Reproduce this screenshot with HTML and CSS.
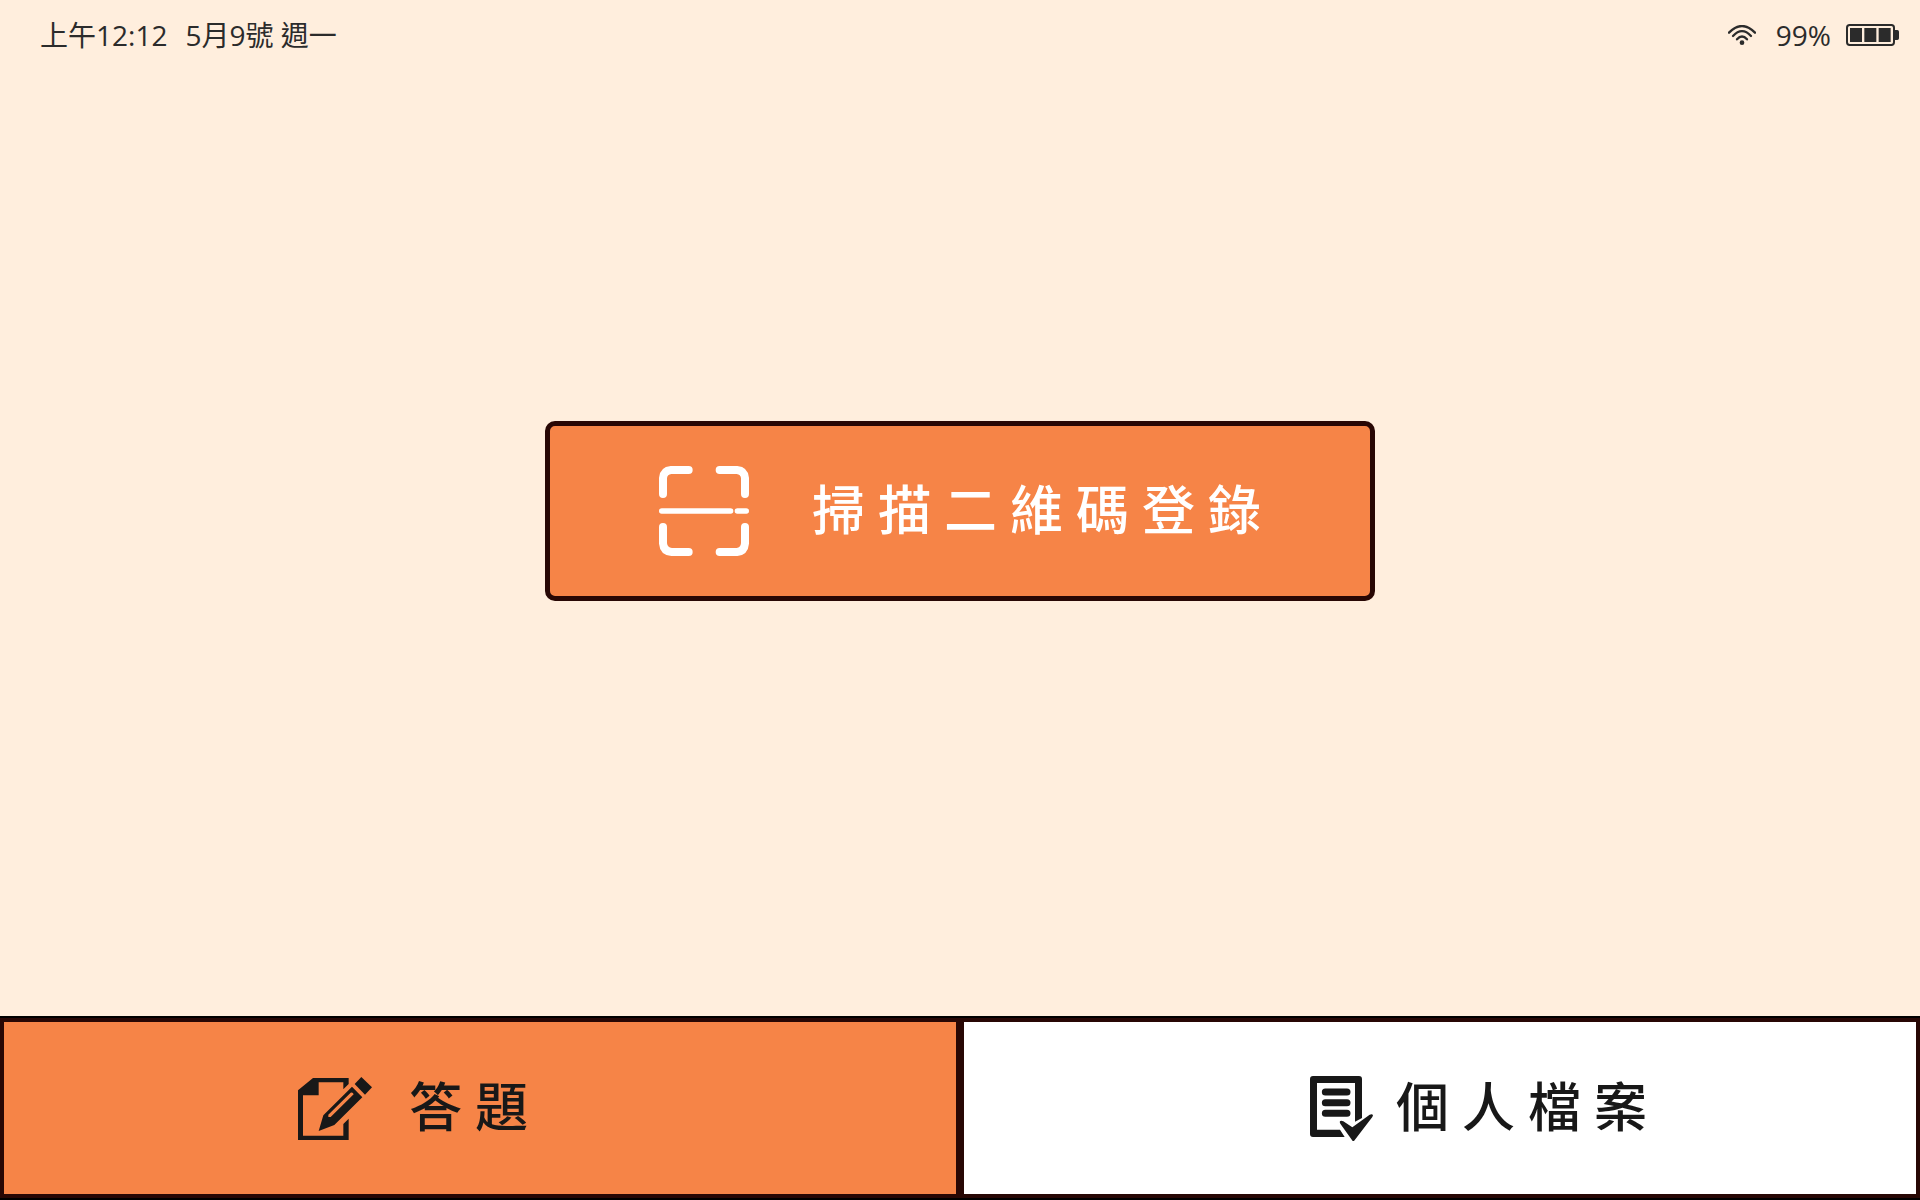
FILE: index.html
```html
<!DOCTYPE html>
<html lang="zh-Hant">
<head>
<meta charset="utf-8">
<meta name="viewport" content="width=device-width, initial-scale=1">
<title>掃描二維碼登錄</title>
<link rel="stylesheet" href="styles.css">
</head>
<body>
<header class="status">
  <div class="status-group">
    <span>上午12:12</span>
    <span>5月9號 週一</span>
  </div>
  <div class="status-group status-right">
    <svg class="wifi" viewBox="0 0 84 60" aria-hidden="true">
      <g fill="none" stroke="currentColor" stroke-width="7" stroke-linecap="round">
        <path d="M3 23Q42-17 81 23"/>
        <path d="M15 33Q42 4 69 33"/>
        <path d="M27 43Q42 26 57 43"/>
      </g>
      <circle cx="42" cy="53" r="7" fill="currentColor"/>
    </svg>
    <span>99%</span>
    <svg class="battery" viewBox="0 0 159 66" aria-hidden="true">
      <rect x="3" y="3" width="141" height="60" rx="8" fill="none" stroke="currentColor" stroke-width="6"/>
      <path fill="currentColor" d="M12 12h36v42H12zM55 12h36v42H55zM98 12h36v42H98zM146 18h8q5 0 5 5v20q0 5-5 5h-8z"/>
    </svg>
  </div>
</header>
<main class="main">
  <button class="scan" type="button">
    <svg class="scan-icon" viewBox="0 0 270 270" aria-hidden="true">
      <g fill="none" stroke="currentColor" stroke-linecap="round">
        <path stroke-width="24" d="M12 84V36Q14 14 36 12H89M182 12H234Q256 14 258 36V84M12 183V232Q14 256 38 258H89M182 258H234Q256 256 258 232V183"/>
        <path stroke-width="16" d="M8 135H215M235 135H262"/>
      </g>
    </svg>
    <span class="label">掃描二維碼登錄</span>
  </button>
</main>
<nav class="tabs">
  <button class="tab tab-quiz" type="button">
    <svg class="quiz-icon" viewBox="54 51 222 189" aria-hidden="true">
      <path fill="currentColor" fill-rule="evenodd" d="M54 91L99 54H206V72L190 88V67H116V106H69V227H190V192L206 176V240H54Z"/>
      <path fill="currentColor" d="M244 51L276 82L255 104L224 72Z"/>
      <path fill="currentColor" fill-rule="evenodd" d="M216 80L247 112L163 195L116 213L130 166ZM212 98L145 164V171H152L221 103Q219 96 212 98Z"/>
    </svg>
    <span class="label">答題</span>
  </button>
  <button class="tab tab-profile" type="button">
    <svg class="profile-icon" viewBox="60 51 189 195" aria-hidden="true">
      <path fill="currentColor" fill-rule="evenodd" d="M69 51H207Q216 51 216 60V177L195 188V72H81V212H150L164 234H69Q60 234 60 225V60Q60 51 69 51Z"/>
      <path fill="none" stroke="currentColor" stroke-width="21" stroke-linecap="round" d="M106 99H171M106 131H171M106 163H171"/>
      <path fill="currentColor" d="M149 189Q151 183 160 187L187 205L239 167Q247 163 249 169L247 174L192 246H188L151 194Z"/>
    </svg>
    <span class="label">個人檔案</span>
  </button>
</nav>
</body>
</html>
```
FILE: styles.css
```css
* {
  box-sizing: border-box;
}

body {
  margin: 0;
  min-height: 100vh;
  display: flex;
  flex-direction: column;
  background: #ffeedd;
  color: #2b2b2b;
  font-family: "Open Sans", "Noto Sans CJK TC", sans-serif;
}

button {
  display: flex;
  align-items: center;
  font: inherit;
  cursor: pointer;
}

svg {
  display: block;
  flex: none;
}

.status {
  height: 70px;
  padding: 0 21px 0 40px;
  display: flex;
  align-items: center;
  justify-content: space-between;
  font-size: 28px;
  line-height: 40px;
}

.status-group {
  display: flex;
  align-items: center;
  gap: 18px;
}

.status-right {
  gap: 15px;
}

.wifi {
  width: 28px;
  height: 20px;
  margin-right: 5px;
}

.battery {
  width: 53px;
  height: 22px;
}

.main {
  flex: 1;
  display: flex;
  align-items: center;
  justify-content: center;
  padding-bottom: 64px;
}

.label {
  padding-bottom: 8px;
  font-family: "Noto Sans CJK TC", sans-serif;
  font-size: 53px;
  font-weight: 500;
  line-height: 80px;
  letter-spacing: 13px;
  white-space: nowrap;
}

.scan {
  width: 830px;
  height: 180px;
  max-width: 100%;
  padding: 0 109px;
  gap: 63px;
  border: 5px solid #280704;
  border-radius: 10px;
  background: #f68447;
  color: #fff;
}

.scan-icon {
  width: 90px;
  height: 90px;
}

.tabs {
  display: grid;
  grid-template-columns: 1fr 1fr;
  border: solid #000;
  border-width: 2px 0;
}

.tab {
  height: 180px;
  border: 4px solid #280704;
  border-radius: 0;
  color: #181818;
}

.tab-quiz {
  padding: 0 0 0 294px;
  gap: 37px;
  background: #f68447;
}

.tab-profile {
  padding: 0 0 0 346px;
  gap: 23px;
  background: #fff;
}

.quiz-icon {
  width: 74px;
  height: 63px;
}

.profile-icon {
  width: 63px;
  height: 65px;
}
```
